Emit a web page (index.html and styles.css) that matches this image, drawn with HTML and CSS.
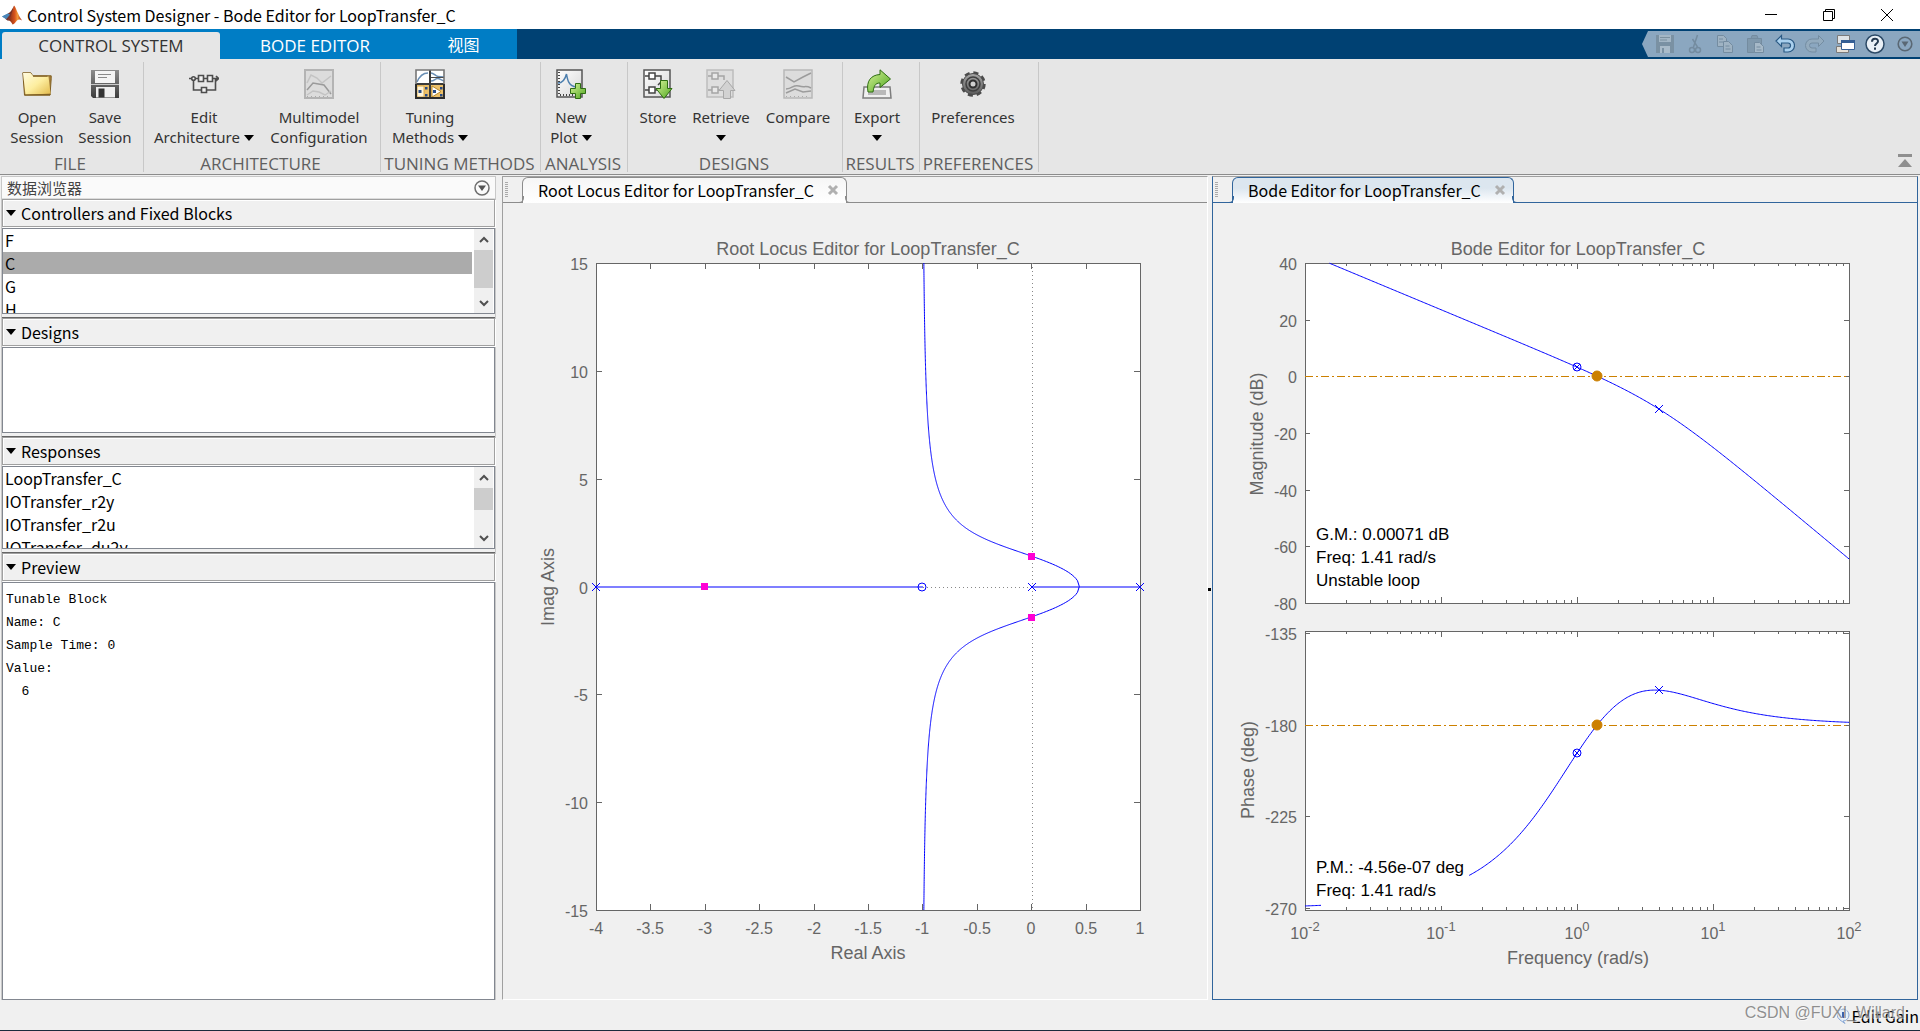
FILE: index.html
```html
<!DOCTYPE html>
<html lang="en">
<head>
<meta charset="utf-8">
<title>Control System Designer - Bode Editor for LoopTransfer_C</title>
<link rel="stylesheet" href="styles.css">
</head>
<body>
<svg class="defs" aria-hidden="true">
  <defs>
    <linearGradient id="gFolder" x1="0" y1="0" x2="1" y2="1"><stop offset="0" stop-color="#fffbe0"/><stop offset=".5" stop-color="#fdeea0"/><stop offset="1" stop-color="#e2b94a"/></linearGradient>
    <linearGradient id="gDisk" x1="0" y1="0" x2="0" y2="1"><stop offset="0" stop-color="#8c8c8c"/><stop offset="1" stop-color="#3c3c3c"/></linearGradient>
    <linearGradient id="gGreen" x1="0" y1="0" x2="1" y2="1"><stop offset="0" stop-color="#d8f49a"/><stop offset="1" stop-color="#4ea61e"/></linearGradient>
    <linearGradient id="gPaper" x1="0" y1="0" x2="1" y2="1"><stop offset="0" stop-color="#ffffff"/><stop offset="1" stop-color="#d6d6d6"/></linearGradient>
    <linearGradient id="gGear" x1="0" y1="0" x2="0" y2="1"><stop offset="0" stop-color="#a6a6a6"/><stop offset="1" stop-color="#5c5c5c"/></linearGradient>
    <linearGradient id="gFlame" x1="0" y1="0" x2="1" y2="0"><stop offset="0" stop-color="#6b2316"/><stop offset=".5" stop-color="#d9541c"/><stop offset=".7" stop-color="#f29a3a"/><stop offset="1" stop-color="#a3200f"/></linearGradient>
  </defs>
</svg>

<header class="titlebar">
  <svg class="logo" viewBox="0 0 20 20" aria-hidden="true">
    <path d="M0 11.500L6 8.500l4 3-4 4z" fill="#4a86b8"/>
    <path d="M6 8.500c2-.5 4-4 6-7.500l-1.500 9L7.500 14l-2 1.500-2-1.500z" fill="#7b3326"/>
    <path d="M0 11.500L6 8.500l2 1-3.500 4.500z" fill="#4a86b8"/>
    <path d="M12 .500C14 2 15.500 9 20 15.500c-2-1.500-3.500-1.500-5 0-1.500 1.500-2.500 3.500-4.500 4-1-2.500-2.500-4.500-5-4 3-1 4.500-8.500 6.500-15z" fill="url(#gFlame)"/>
  </svg>
  <h1 class="title">Control System Designer - Bode Editor for LoopTransfer_C</h1>
  <div class="window-buttons">
    <button type="button" aria-label="Minimize"><svg viewBox="0 0 14 14"><path d="M1 6.500h12"/></svg></button>
    <button type="button" aria-label="Restore"><svg viewBox="0 0 14 14"><path d="M1.500 3.500h9v9h-9zM3.500 3.500v-2h9v9h-2"/></svg></button>
    <button type="button" aria-label="Close"><svg viewBox="0 0 14 14"><path d="M1 1l12 12M13 1L1 13"/></svg></button>
  </div>
</header>

<nav class="tabstrip">
  <div class="tabs" role="tablist">
    <button type="button" role="tab" aria-selected="true" class="tab tab-main active">CONTROL SYSTEM</button>
    <button type="button" role="tab" aria-selected="false" class="tab tab-bode">BODE EDITOR</button>
    <button type="button" role="tab" aria-selected="false" class="tab tab-view">视图</button>
  </div>
  <div class="quick">
    <button type="button" aria-label="Save" disabled><svg viewBox="0 0 20 20"><path d="M1 1h18v18H1z" fill="#7a91a3"/><path d="M4 1h12v7H4z" fill="#a3b6c5"/><path d="M5 3.500h10M5 6h7" stroke="#7b909f"/><path d="M5 12h10v7H5z" fill="#a9bbc9"/><path d="M7 14h2v5H7z" fill="#7a91a3"/></svg></button>
    <button type="button" aria-label="Cut" disabled><svg viewBox="0 0 20 20" fill="none" stroke="#748ca0" stroke-width="1.500"><path d="M12.500 1L8.500 13M7.500 5l5 8"/><circle cx="7" cy="16" r="2.500"/><circle cx="13" cy="16" r="2.500"/></svg></button>
    <button type="button" aria-label="Copy" disabled><svg viewBox="0 0 20 20" fill="#9fb3c3" stroke="#748ca0"><path d="M2.500 1.500h6l3 3v8h-9z"/><path d="M8.500 7.500h5l4 4v7h-9z"/><path d="M4 5h4M4 8h4M10.500 12h4M10.500 15h5"/></svg></button>
    <button type="button" aria-label="Paste" disabled><svg viewBox="0 0 20 20" fill="#8099ad" stroke="#748ca0"><path d="M2.500 4.500h14v14h-14z"/><path d="M6 4.500l1-3h5l1 3z"/><path d="M9.500 8.500h5l4 4v6h-9z" fill="#a6b9c8"/><path d="M11.500 13h4M11.500 16h5"/></svg></button>
    <button type="button" aria-label="Undo"><svg viewBox="0 0 20 20"><path d="M1 7l5.500-5.500v3.500H13a6 6 0 0 1 0 13H9v-4h4a2.500 2.500 0 0 0 0-5H6.500v3.500z" fill="#a9d0ee" stroke="#2b5a84" stroke-width="1.200"/></svg></button>
    <button type="button" aria-label="Redo" disabled><svg viewBox="0 0 20 20"><path d="M19 7l-5.500-5.500v3.500H7a6 6 0 0 0 0 13h4v-4H7a2.500 2.500 0 0 1 0-5h6.500v3.500z" fill="#93abbe" stroke="#748da2"/></svg></button>
    <button type="button" aria-label="Switch windows"><svg viewBox="0 0 20 20"><path d="M2.500 1.500h12v8h-12z" fill="#dfe3e6" stroke="#7a7a7a"/><path d="M1.500 12.500h12v6h-12z" fill="#e6e0d6" stroke="#7a7a7a"/><path d="M6.500 6.500h13v9h-13z" fill="#fff" stroke="#355f94"/><path d="M6 6h14v3H6z" fill="#355f94"/></svg></button>
    <button type="button" aria-label="Help"><svg viewBox="0 0 20 20"><circle cx="10" cy="10" r="9" fill="#e9f0f6" stroke="#2c4a66" stroke-width="1.500"/><path d="M7 7.800c0-4 6-4 6-.6 0 2.300-3 2.200-3 4.800" fill="none" stroke="#24394f" stroke-width="2"/><path d="M9 13.500h2v2.200H9z" fill="#24394f"/></svg></button>
    <button type="button" aria-label="Customize"><svg viewBox="0 0 20 20"><circle cx="10" cy="10" r="6.800" fill="none" stroke="#5a6874" stroke-width="1.600"/><path d="M6.500 7.500h7L10 13z" fill="#5a6874"/></svg></button>
  </div>
</nav>

<div class="ribbon">
  <section class="group">
    <div class="tools">
      <button type="button" class="tool w68">
        <svg viewBox="0 0 30 30"><path d="M.8 3.800h8l2 3H29.200v3L28 26.200H2.500z" fill="#a9823a" stroke="#7f5f22"/><path d="M1 4h7.500l3 3.500h15l2 17-25 1.500z" fill="url(#gFolder)"/><path d="M11 7.200h14.500M2.500 25.800l26-.3" stroke="#7f5f22" fill="none"/></svg>
        <span>Open<br>Session</span></button>
      <button type="button" class="tool w68">
        <svg viewBox="0 0 30 30"><path d="M1 1h28v28H3l-2-2z" fill="url(#gDisk)"/><path d="M5 2h20v12H5z" fill="#f4f4f4"/><path d="M8 5.500h13M8 8.500h9" stroke="#8a8a8a"/><path d="M1 15.500h28" stroke="#c9c9c9"/><path d="M6 18h19v10.500H6z" fill="#efefef"/><path d="M8.500 19.500h6v9h-6z" fill="#333"/></svg>
        <span>Save<br>Session</span></button>
    </div>
    <h2>FILE</h2>
  </section>
  <section class="group arch">
    <div class="tools">
      <button type="button" class="tool w114">
        <svg viewBox="0 0 30 30" fill="none" stroke="#4d4d4d" stroke-width="1.600"><path d="M0 9.500h9M15 9.500h3M24 9.500h6M4.500 11v10H12M18 21h8.500V9.500M27 7l2.500 2.500L27 12"/><path d="M9.500 6.500h5v6h-5zM18.500 6.500h5v6h-5zM12.500 18.500h5v5h-5z" fill="#f2f2f2"/><circle cx="4.500" cy="9.500" r="1.800" fill="#f2f2f2"/></svg>
        <span>Edit<br>Architecture<i class="drop"></i></span></button>
      <button type="button" class="tool w116 dim" disabled>
        <svg viewBox="0 0 30 30" fill="none"><path d="M1 1h28v28H1z" fill="#dcdcdc" stroke="#b4b4b4" stroke-width="2"/><path d="M3 14l4-8 6 3 5 5 9-7" stroke="#c3c3c3" stroke-width="1.500"/><path d="M3 21l6-7 11 2 7 9" stroke="#9a9a9a" stroke-width="1.500"/><path d="M3 26l6-4 6 1 6 3 6-4" stroke="#c3c3c3" stroke-width="1.500"/><path d="M3 27.500h24" stroke="#aaa" stroke-dasharray="1 3"/></svg>
        <span>Multimodel<br>Configuration</span></button>
    </div>
    <h2>ARCHITECTURE</h2>
  </section>
  <section class="group tuning">
    <div class="tools">
      <button type="button" class="tool w98">
        <svg viewBox="0 0 30 30" fill="none"><path d="M1 1h28v28H1z" fill="#fff"/><path d="M1 16h28v13H1z" fill="#ecc069"/><path d="M2 13C5 6 9 4 13 4" stroke="#6a8fb5" stroke-width="1.500"/><path d="M16 4c3 0 4 3 7 3.500s5 .5 6 .5M16 12c3 0 4-2 6-2.500s5 2 7 2.500" stroke="#6a8fb5" stroke-width="1.500"/><path d="M16 8.500h13" stroke="#4a4a4a"/><path d="M17 17l9 5.500-9 5.500z" fill="#fff" stroke="#b98a2c"/><path d="M2 17h7v11H2z" fill="#fff4d8" stroke="#d6a64a"/><path d="M3.500 21h3v3h-3zM10 18h2.500v2.500H10zM10 25h2.500v2.500H10zM18 21h3v3h-3zM25 18h2.500v2.500H25zM25 25h2.500v2.500H25z" fill="#274a86"/><path d="M15 1v28M1 15h28" stroke="#3c3c3c" stroke-width="2"/><path d="M1 15V1h28v14" stroke="#777" stroke-width="1.600"/><path d="M1 15v14h28V15" stroke="#2c2c2c" stroke-width="2"/></svg>
        <span>Tuning<br>Methods<i class="drop"></i></span></button>
    </div>
    <h2>TUNING METHODS</h2>
  </section>
  <section class="group analysis">
    <div class="tools">
      <button type="button" class="tool w60">
        <svg viewBox="0 0 30 30" fill="none"><path d="M1 1h25v27H1z" fill="url(#gPaper)" stroke="#555" stroke-width="1.500"/><path d="M2 14c5 0 7-3 8.500-9 1 6 2 12 10 13" stroke="#4d7fae" stroke-width="1.500"/><path d="M3 3v22M4 26h16" stroke="#444" stroke-dasharray="1 2" stroke-width="2"/><path d="M19.500 14.500h5v5h5v5h-5v5h-5v-5h-5v-5h5z" fill="url(#gGreen)" stroke="#2e6d12"/></svg>
        <span>New<br>Plot<i class="drop"></i></span></button>
    </div>
    <h2>ANALYSIS</h2>
  </section>
  <section class="group designs">
    <div class="tools">
      <button type="button" class="tool w60">
        <svg viewBox="0 0 30 30" fill="none"><path d="M1 1h26v27H1z" fill="url(#gPaper)" stroke="#555" stroke-width="1.500"/><path d="M2 7h4M12 7h6v6M2 21h4M12 21h4M18 13l-3 3" stroke="#444" stroke-width="1.500"/><path d="M6 4h6v6H6zM6 18h6v6H6z" fill="#fff" stroke="#444" stroke-width="1.500"/><path d="M17.500 11.500h7v8h4.500L21 29.500l-8-10h4.500z" fill="url(#gGreen)" stroke="#2e6d12"/></svg>
        <span>Store</span></button>
      <button type="button" class="tool w66 dim" disabled>
        <svg viewBox="0 0 30 30" fill="none"><path d="M1 1h26v27H1z" fill="#dedede" stroke="#bdbdbd" stroke-width="1.500"/><path d="M2 7h4M12 7h6v4M2 21h4M12 21h4" stroke="#a5a5a5" stroke-width="1.500"/><path d="M6 4h6v6H6zM6 18h6v6H6z" fill="#e8e8e8" stroke="#a5a5a5" stroke-width="1.500"/><path d="M17.500 29.500h7v-8h4.500l-8-10-8 10h4.500z" fill="#d2d2d2" stroke="#a8a8a8"/></svg>
        <span>Retrieve<br><i class="drop solo"></i></span></button>
      <button type="button" class="tool w88 dim" disabled>
        <svg viewBox="0 0 30 30" fill="none"><path d="M1 1h28v28H1z" fill="#dcdcdc" stroke="#b8b8b8" stroke-width="1.500"/><path d="M3 8l8 5 9-5 8-4M3 20c7 0 7-5 13-3s6-1 12 2M3 24l9-4 8 3 8-1" stroke="#9c9c9c" stroke-width="1.500"/><path d="M3 27.500h24" stroke="#aaa" stroke-dasharray="1 3"/></svg>
        <span>Compare</span></button>
    </div>
    <h2>DESIGNS</h2>
  </section>
  <section class="group results">
    <div class="tools">
      <button type="button" class="tool w68">
        <svg viewBox="0 0 30 30" fill="none"><path d="M2 18h26l1 11H1z" fill="#f0f0f0" stroke="#7d7d7d" stroke-width="1.500"/><path d="M6 21h18v5H6z" fill="#b9b9b9"/><path d="M6 23C4 12 9 6 18 5.500V.800l10.500 9.200L18 18.500v-4.500c-5 0-6 3-7 9z" fill="url(#gGreen)" stroke="#2e6d12"/></svg>
        <span>Export<br><i class="drop solo"></i></span></button>
    </div>
    <h2>RESULTS</h2>
  </section>
  <section class="group prefs">
    <div class="tools">
      <button type="button" class="tool w106">
        <svg viewBox="0 0 30 30"><circle cx="15" cy="15" r="11.200" fill="none" stroke="#4b4b4b" stroke-width="3" stroke-dasharray="5 3.800"/><circle cx="15" cy="15" r="10.500" fill="url(#gGear)" stroke="#4b4b4b"/><circle cx="15" cy="15" r="7" fill="none" stroke="#3f3f3f" stroke-width="1.500"/><circle cx="15" cy="15" r="3.500" fill="#d0d0d0" stroke="#2f2f2f" stroke-width="2"/></svg>
        <span>Preferences</span></button>
    </div>
    <h2>PREFERENCES</h2>
  </section>
  <button type="button" class="collapse" aria-label="Minimize toolstrip"><svg viewBox="0 0 14 14"><path d="M0 0h14v3H0zM7 5l7 8H0z" fill="#8f8f8f"/></svg></button>
</div>

<main class="workspace">
  <aside class="browser">
    <div class="browser-head">
      <span>数据浏览器</span>
      <button type="button" aria-label="Panel menu"><svg viewBox="0 0 16 16"><circle cx="8" cy="8" r="7" fill="none" stroke="#6e6e6e" stroke-width="1.500"/><path d="M4 5.500h8L8 11z" fill="#555"/></svg></button>
    </div>
    <section class="block">
      <button type="button" class="block-head" aria-expanded="true"><i class="fold"></i>Controllers and Fixed Blocks</button>
      <div class="box">
        <ul><li>F</li><li class="selected">C</li><li>G</li><li>H</li></ul>
        <div class="scroll"><svg viewBox="0 0 10 6"><path d="M1 5l4-4 4 4"/></svg><b class="thumb-long"></b><svg viewBox="0 0 10 6"><path d="M1 1l4 4 4-4"/></svg></div>
      </div>
    </section>
    <section class="block">
      <button type="button" class="block-head" aria-expanded="true"><i class="fold"></i>Designs</button>
      <div class="box"></div>
    </section>
    <section class="block responses">
      <button type="button" class="block-head" aria-expanded="true"><i class="fold"></i>Responses</button>
      <div class="box">
        <ul><li>LoopTransfer_C</li><li>IOTransfer_r2y</li><li>IOTransfer_r2u</li><li>IOTransfer_du2y</li></ul>
        <div class="scroll"><svg viewBox="0 0 10 6"><path d="M1 5l4-4 4 4"/></svg><b></b><svg viewBox="0 0 10 6"><path d="M1 1l4 4 4-4"/></svg></div>
      </div>
    </section>
    <section class="block preview">
      <button type="button" class="block-head" aria-expanded="true"><i class="fold"></i>Preview</button>
      <pre class="box">Tunable Block
Name: C
Sample Time: 0
Value:
  6</pre>
    </section>
  </aside>

  <section class="doc">
    <div class="doc-bar"><i class="grip"></i>
      <div class="doc-tab"><span>Root Locus Editor for LoopTransfer_C</span><button type="button" aria-label="Close"><svg viewBox="0 0 12 12"><path d="M2 2l8 8M10 2l-8 8"/></svg></button></div>
    </div>
    <svg class="plot" viewBox="0 0 704 796" role="img" aria-label="Root locus plot">
      <text class="label" x="365" y="52" text-anchor="middle">Root Locus Editor for LoopTransfer_C</text>
      <g transform="translate(93 60)" id="locus">
        <rect class="axes" width="544" height="647"/>
        <g class="ticks"></g>
        <path class="zero" d="M436 0V647M327 324H436"/>
        <path class="real" d="M0 324H327M436 324H544"/>
        <path class="curve"/>
        <g class="mark"><path d="M-4 320l8 8m0-8l-8 8M432 320l8 8m0-8l-8 8M540 320l8 8m0-8l-8 8"/><circle cx="326" cy="324" r="4"/></g>
        <path class="pole" d="M105 320h7v7h-7zM432 290h7v7h-7zM432 351h7v7h-7z"/>
        <g class="num x"></g><g class="num y"></g>
      </g>
      <text class="label" x="365" y="756" text-anchor="middle">Real Axis</text>
      <text class="label" transform="translate(51 384) rotate(-90)" text-anchor="middle">Imag Axis</text>
    </svg>
    <i class="splitter"></i>
  </section>

  <section class="doc current">
    <div class="doc-bar"><i class="grip"></i>
      <div class="doc-tab"><span>Bode Editor for LoopTransfer_C</span><button type="button" aria-label="Close"><svg viewBox="0 0 12 12"><path d="M2 2l8 8M10 2l-8 8"/></svg></button></div>
    </div>
    <svg class="plot" viewBox="0 0 704 796" role="img" aria-label="Bode plot">
      <text class="label" x="365" y="52" text-anchor="middle">Bode Editor for LoopTransfer_C</text>
      <g transform="translate(92 60)" id="mag">
        <rect class="axes" width="544" height="340"/>
        <g class="ticks"></g>
        <path class="margin-line" d="M0 113H544"/>
        <path class="curve"/>
        <g class="mark"></g>
        <g class="num y"></g>
        <g class="note"><text x="11" y="277">G.M.: 0.00071 dB</text><text x="11" y="300">Freq: 1.41 rad/s</text><text x="11" y="323">Unstable loop</text></g>
      </g>
      <g transform="translate(92 428)" id="phase">
        <rect class="axes" width="544" height="279"/>
        <g class="ticks"></g>
        <path class="margin-line" d="M0 94H544"/>
        <path class="curve"/>
        <g class="mark"></g>
        <g class="num y"></g><g class="num x"></g>
        <g class="note"><rect x="16" y="225" width="148" height="50" fill="#fff"/><text x="11" y="242">P.M.: -4.56e-07 deg</text><text x="11" y="265">Freq: 1.41 rad/s</text></g>
      </g>
      <text class="label" x="365" y="761" text-anchor="middle">Frequency (rad/s)</text>
      <text class="label" transform="translate(50 231) rotate(-90)" text-anchor="middle">Magnitude (dB)</text>
      <text class="label" transform="translate(41 567) rotate(-90)" text-anchor="middle">Phase (deg)</text>
    </svg>
  </section>
</main>

<footer class="status">
  <svg viewBox="0 0 14 16" aria-hidden="true"><path d="M7 1a6 6 0 1 1 0 12l2 2.500-5-3.500A6 6 0 0 1 7 1z" fill="#e3edfa" stroke="#8ba9d4"/><path d="M7 4v6" stroke="#3b62ae" stroke-width="2"/></svg>
  <span>Edit Gain</span>
  <div class="watermark">CSDN @FUXI_Willard</div>
</footer>
<script src="plots.js"></script>
</body>
</html>
```
FILE: plots.js
```js
// Loop transfer function: L(s) = 6 (s + 1) / (s (s - 1) (s + 4))
const find = (id, sel) => document.querySelector('#' + id + ' ' + sel);
const toPath = pts => 'M' + pts.map(p => p[0].toFixed(2) + ' ' + p[1].toFixed(2)).join('L');
const WIDTH = 544;

// Root locus
{
  const H = 647, mid = 323.5;
  const X = s => (s + 4) * WIDTH / 5;
  const Y = w => mid - w * H / 30;
  const upper = [];
  for (let i = 0; i <= 400; i++) {
    const u = Math.cbrt(3) * Math.pow(0.0133 / Math.cbrt(3), i / 400);
    const w = Math.sqrt(Math.max(0, 3 / u - u * u));
    if (w <= 15) upper.push([u - 1, w]);
  }
  upper.push([-0.9867, 15]);
  const lower = upper.map(([s, w]) => [s, -w]).reverse();
  find('locus', '.curve').setAttribute('d', toPath(lower.concat(upper).map(([s, w]) => [X(s), Y(w)])));
  let ticks = '', nx = '', ny = '';
  for (let v = -4; v <= 1; v += 0.5) {
    const x = Math.round(X(v));
    ticks += `M${x} 0v6M${x} ${H}v-6`;
    nx += `<text x="${x}" y="${H + 24}">${v}</text>`;
  }
  for (let v = -15; v <= 15; v += 5) {
    const y = Math.round(Y(v));
    ticks += `M0 ${y}h6M${WIDTH} ${y}h-6`;
    ny += `<text x="-8" y="${y + 7}">${v}</text>`;
  }
  find('locus', '.ticks').innerHTML = `<path d="${ticks}"/>`;
  find('locus', '.x').innerHTML = nx;
  find('locus', '.y').innerHTML = ny;
}

// Bode diagrams
const LX = w => (Math.log10(w) + 2) * WIDTH / 4;
const deg = Math.atan2(1, 1) / 45;
function bode(id, H, fn, Y, values) {
  const pts = [];
  for (let i = 0; i <= 400; i++) {
    const w = Math.pow(10, -2 + i / 100);
    const y = Y(fn(w));
    if (y >= 0) pts.push([LX(w), y]);
  }
  find(id, '.curve').setAttribute('d', toPath(pts));
  let ticks = '', ny = '';
  for (let d = -2; d < 2; d++)
    for (let k = 1; k < 10; k++) {
      const x = Math.round(LX(k * Math.pow(10, d))), n = k === 1 ? 6 : 3;
      ticks += `M${x} 0v${n}M${x} ${H}v-${n}`;
    }
  values.forEach(v => {
    const y = Math.round(Y(v));
    ticks += `M0 ${y}h5M${WIDTH} ${y}h-5`;
    ny += `<text x="-8" y="${y + 7}">${v}</text>`;
  });
  find(id, '.ticks').innerHTML = `<path d="${ticks}"/>`;
  find(id, '.y').innerHTML = ny;
  const at = w => [Math.round(LX(w)), Math.round(Y(fn(w)))];
  const cross = ([x, y], r) => `<path d="M${x - r} ${y - r}l${2 * r} ${2 * r}m0-${2 * r}l-${2 * r} ${2 * r}"/>`;
  const a = at(1), b = at(4), c = at(Math.SQRT2);
  find(id, '.mark').innerHTML = cross(a, 3) + `<circle cx="${a[0]}" cy="${a[1]}" r="4"/>` + cross(b, 4) +
    `<circle class="margin-dot" cx="${c[0]}" cy="${c[1]}" r="5"/>`;
}
bode('mag', 340, w => 20 * Math.log10(6 / (w * Math.hypot(w, 4))), v => (40 - v) * 340 / 120,
  [40, 20, 0, -20, -40, -60, -80]);
bode('phase', 279, w => -270 + (2 * Math.atan(w) - Math.atan(w / 4)) / deg, v => 2 + (-135 - v) * 275 / 135,
  [-135, -180, -225, -270]);
find('phase', '.x').innerHTML = [-2, -1, 0, 1, 2].map(e =>
  `<text x="${LX(Math.pow(10, e))}" y="308">10<tspan class="sup" dy="-8">${e}</tspan></text>`).join('');
```
FILE: styles.css
```css
* { box-sizing: border-box; }
body {
  margin: 0;
  height: 100vh;
  display: flex;
  flex-direction: column;
  background: #f0f0f0;
  color: #000;
  font: 16px/22px "Noto Sans CJK SC", "Noto Sans", sans-serif;
  overflow: hidden;
}
button { margin: 0; padding: 0; border: 0; background: none; font: inherit; color: inherit; }
h1, h2, ul, pre { margin: 0; padding: 0; font-weight: 400; list-style: none; }
.defs { position: absolute; width: 0; height: 0; }

/* Title bar */
.titlebar { display: flex; align-items: center; height: 29px; background: #fff; flex: none; }
.logo { width: 20px; height: 20px; margin: 0 5px 0 2px; }
.title { flex: 1; font-size: 16px; }
.window-buttons { display: flex; padding-right: 4px; }
.window-buttons button { width: 58px; height: 29px; display: flex; align-items: center; justify-content: center; }
.window-buttons svg { width: 14px; height: 14px; fill: none; stroke: #000; }

/* Toolstrip tabs */
.tabstrip { display: flex; justify-content: space-between; height: 30px; background: #004173; flex: none; }
.tabs { display: flex; align-items: flex-end; background: #007dc5; padding-left: 2px; }
.tab { height: 27px; color: #fff; font: 17px/27px "Open Sans", "Noto Sans CJK SC", sans-serif; border-radius: 3px 3px 0 0; }
.tab.active { background: #e6e6e6; color: #333; }
.tab-main { width: 218px; }
.tab-bode { width: 190px; }
.tab-view { width: 107px; font-size: 16px; }
.quick {
  display: flex; align-items: center; gap: 10px; height: 26px; margin: 2px 0; padding: 0 5px 0 13px;
  background: #8ba7c0; clip-path: polygon(6px 0, 100% 0, 100% 100%, 6px 100%, 0 50%);
}
.quick button { width: 20px; height: 20px; }
.quick svg { display: block; width: 20px; height: 20px; }

/* Ribbon */
.ribbon { display: flex; height: 116px; padding-top: 3px; background: #e6e6e6; border-bottom: 1px solid #8c8c8c; flex: none; }
.group { display: flex; flex-direction: column; justify-content: space-between; height: 110px; width: 144px; padding-left: 3px; border-right: 1px solid #c8c8c8; }
.group h2 { padding-right: 6px; text-align: center; color: #5f5f5f; font: 17px/16px "Open Sans", sans-serif; white-space: nowrap; }
.arch { width: 237px; }
.tuning { width: 160px; padding-left: 0; }
.analysis { width: 87px; padding-left: 0; }
.designs { width: 215px; padding-left: 0; }
.results { width: 77px; padding-left: 0; }
.prefs { width: 119px; padding-left: 0; }
.tuning h2, .analysis h2, .designs h2, .results h2, .prefs h2 { padding-right: 2px; }
.tools { display: flex; align-items: flex-start; }
.tool { display: flex; flex-direction: column; align-items: center; gap: 8px; padding-top: 7px; color: #333; font: 15px/20px "Noto Sans", sans-serif; white-space: nowrap; }
.tool > svg { width: 30px; height: 30px; }
.w60 { width: 60px; }
.w66 { width: 66px; }
.w68 { width: 68px; }
.w88 { width: 88px; }
.w98 { width: 98px; }
.w106 { width: 106px; }
.w114 { width: 114px; }
.w116 { width: 116px; }
.drop { display: inline-block; margin: 0 0 2px 4px; border: solid transparent; border-width: 6px 5px 0; border-top-color: #000; }
.drop.solo { margin-left: 0; }
.collapse { align-self: flex-end; margin: 0 8px 6px auto; height: 14px; }
.collapse svg { display: block; width: 14px; height: 14px; }

/* Workspace */
.workspace { flex: 1; min-height: 0; display: flex; padding: 1px 2px 0 1px; }
.browser { flex: none; width: 495px; display: flex; flex-direction: column; border: 1px solid #c8c8c8; border-bottom: 0; }
.browser-head { display: flex; align-items: center; justify-content: space-between; height: 22px; padding: 0 5px; background: #fafafa; border-bottom: 1px solid #dcdcdc; color: #444; font-size: 15px; line-height: 20px; }
.browser-head button, .browser-head svg { display: block; width: 16px; height: 16px; }
.block { display: flex; flex-direction: column; gap: 1px; padding-bottom: 3px; }
.block + .block { border-top: 1px solid #666; }
.block-head { display: flex; align-items: center; gap: 5px; height: 28px; padding: 0 3px; background: #f0f0f0; border: 1px solid #a0a0a0; box-shadow: inset 1px 1px #fff, 1px 1px #fff; text-align: left; }
.fold { border: solid transparent; border-width: 6px 5px 0; border-top-color: #000; }
.box { display: flex; height: 86px; border: 1px solid #828790; background: #fff; overflow: hidden; }
.responses .box { height: 83px; }
.box ul { flex: 1; padding-right: 2px; }
.box li { height: 22px; margin-bottom: 1px; padding-left: 2px; line-height: 22px; }
.box .selected { background: #ababab; }
.scroll { width: 19px; display: grid; grid-template-rows: 21px 1fr 21px; justify-items: center; align-items: center; background: #f0f0f0; margin-right: 1px; }
.scroll svg { width: 10px; height: 6px; fill: none; stroke: #505050; stroke-width: 2; overflow: visible; }
.scroll b { align-self: start; width: 19px; height: 22px; background: #cdcdcd; }
.scroll .thumb-long { height: 38px; }
.preview { flex: 1; padding-bottom: 0; }
.preview .box { flex: 1; display: block; padding: 5px 3px; font: 13px/23px "Liberation Mono", monospace; }

/* Documents */
.doc { position: relative; flex: 1 1 0; min-width: 0; display: flex; flex-direction: column; margin-left: 6px; border: 1px solid #a0a0a0; border-right-color: #fff; border-bottom-color: #fff; }
.doc-bar { display: flex; height: 26px; padding-left: 2px; border-bottom: 1px solid #8c8c8c; flex: none; }
.grip { width: 3px; height: 15px; margin-top: 5px; background: repeating-linear-gradient(#aaa 0 1px, transparent 1px 2px); }
.doc-tab { position: relative; display: flex; align-items: center; gap: 13px; height: 26px; margin-left: 14px; padding: 0 7px 2px 15px; white-space: nowrap; background: linear-gradient(#f6f6f6, #fff); border: 1px solid #8c8c8c; border-bottom: 0; border-radius: 6px 6px 0 0; }
.doc-tab::before, .doc-tab::after { content: ""; position: absolute; bottom: 0; width: 6px; height: 6px; border-bottom: 1px solid #8c8c8c; }
.doc-tab::before { left: -6px; border-right: 1px solid #8c8c8c; border-bottom-right-radius: 5px; }
.doc-tab::after { right: -6px; border-left: 1px solid #8c8c8c; border-bottom-left-radius: 5px; }
.doc-tab button, .doc-tab svg { display: block; width: 12px; height: 12px; }
.doc-tab svg { fill: none; stroke: #b0b0b0; stroke-width: 3; }
.doc.current { margin-left: 4px; border-color: #a0a0a0 #31659c #31659c; }
.current .doc-bar, .current .doc-tab, .current .doc-tab::before, .current .doc-tab::after { border-color: #31659c; }
.current .doc-tab { background: linear-gradient(#dce6ef 40%, #fff); }
.plot { flex: 1; min-height: 0; width: 100%; display: block; }
.splitter { position: absolute; right: -4px; top: 50%; width: 3px; height: 3px; background: #000; }

.plot text { font-family: "Liberation Sans", sans-serif; }
.plot .label { font-size: 18px; fill: #666; }
.num text { font-size: 16px; fill: #666; }
.num.x text { text-anchor: middle; }
.num.y text { text-anchor: end; }
.num .sup { font-size: 13px; }
.note text { font-size: 17px; fill: #000; }
.axes { fill: #fff; stroke: #666; shape-rendering: crispEdges; }
.ticks path { fill: none; stroke: #666; shape-rendering: crispEdges; }
.curve { fill: none; stroke: #00f; }
.real { fill: none; stroke: #7f7fff; stroke-width: 2; }
.zero { fill: none; stroke: #888; stroke-dasharray: 1 3; shape-rendering: crispEdges; }
.mark { fill: none; stroke: #00f; }
.pole { fill: #ff00d4; }
.margin-line { fill: none; stroke: #cc8000; stroke-dasharray: 8 3 2 3; shape-rendering: crispEdges; }
.margin-dot { fill: #cc8000; stroke: #cc8000; }

/* Status bar */
.status { position: relative; display: flex; align-items: center; justify-content: flex-end; gap: 2px; height: 31px; padding: 2px 1px 0 0; border-bottom: 1px solid #1c2b3d; flex: none; }
.status svg { width: 14px; height: 16px; }
.watermark { position: absolute; right: 15px; top: 2px; color: rgba(110, 110, 110, .75); font: 16px/22px "Liberation Sans", sans-serif; text-shadow: 1px 1px rgba(255, 255, 255, .6); }
```
